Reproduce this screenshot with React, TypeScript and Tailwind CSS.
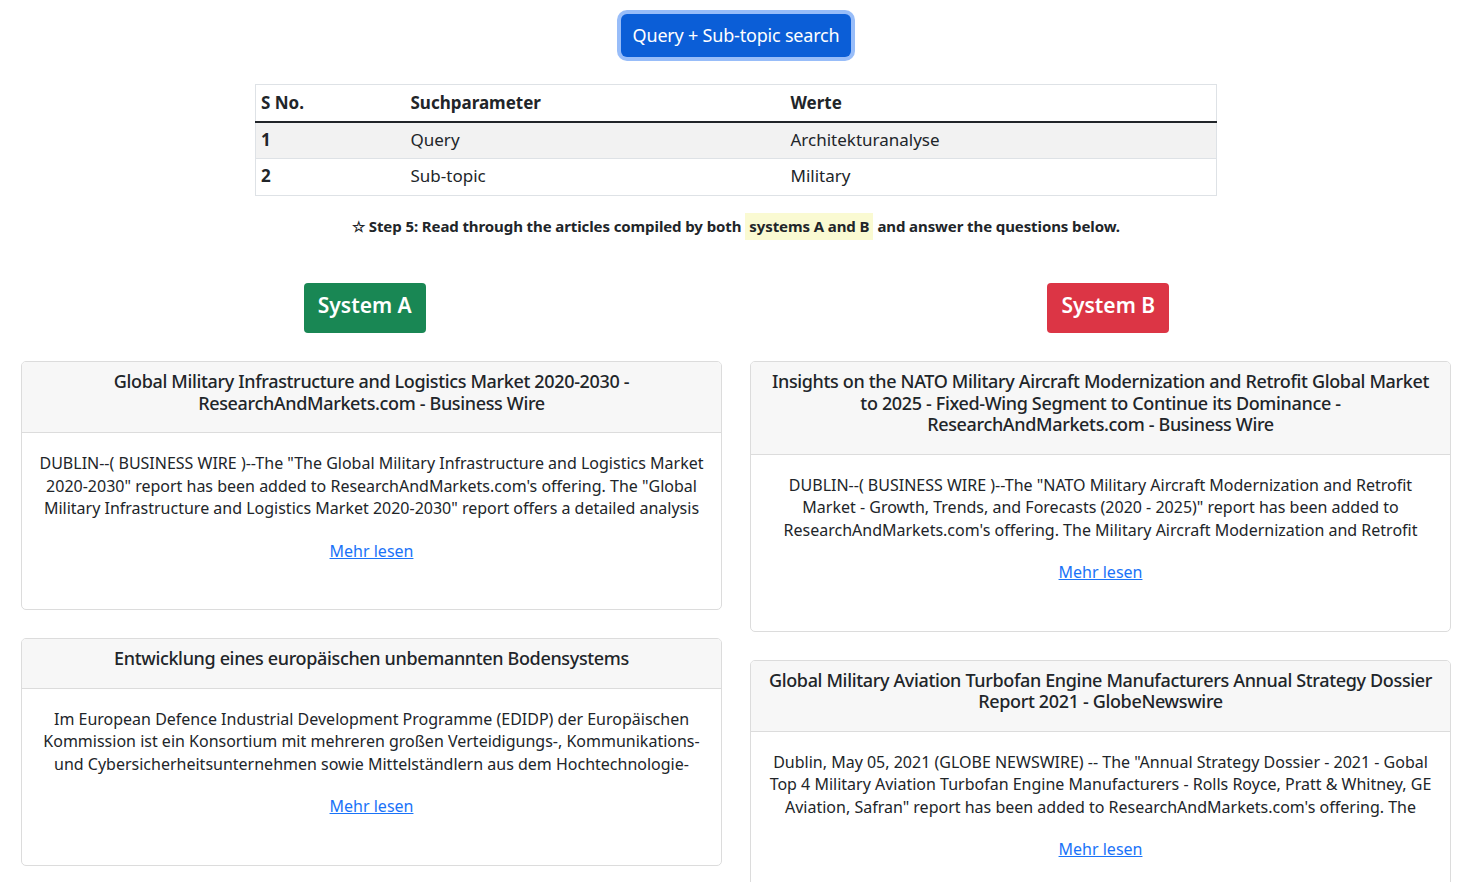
import React from "react";

type Card = { title: string[]; body: string[] };

const left: Card[] = [
  {
    title: [
      "Global Military Infrastructure and Logistics Market 2020-2030 -",
      "ResearchAndMarkets.com - Business Wire",
    ],
    body: [
      'DUBLIN--( BUSINESS WIRE )--The "The Global Military Infrastructure and Logistics Market',
      '2020-2030" report has been added to ResearchAndMarkets.com\'s offering. The "Global',
      'Military Infrastructure and Logistics Market 2020-2030" report offers a detailed analysis',
    ],
  },
  {
    title: ["Entwicklung eines europäischen unbemannten Bodensystems"],
    body: [
      "Im European Defence Industrial Development Programme (EDIDP) der Europäischen",
      "Kommission ist ein Konsortium mit mehreren großen Verteidigungs-, Kommunikations-",
      "und Cybersicherheitsunternehmen sowie Mittelständlern aus dem Hochtechnologie-",
    ],
  },
];

const right: Card[] = [
  {
    title: [
      "Insights on the NATO Military Aircraft Modernization and Retrofit Global Market",
      "to 2025 - Fixed-Wing Segment to Continue its Dominance -",
      "ResearchAndMarkets.com - Business Wire",
    ],
    body: [
      'DUBLIN--( BUSINESS WIRE )--The "NATO Military Aircraft Modernization and Retrofit',
      'Market - Growth, Trends, and Forecasts (2020 - 2025)" report has been added to',
      "ResearchAndMarkets.com's offering. The Military Aircraft Modernization and Retrofit",
    ],
  },
  {
    title: [
      "Global Military Aviation Turbofan Engine Manufacturers Annual Strategy Dossier",
      "Report 2021 - GlobeNewswire",
    ],
    body: [
      'Dublin, May 05, 2021 (GLOBE NEWSWIRE) -- The "Annual Strategy Dossier - 2021 - Gobal',
      "Top 4 Military Aviation Turbofan Engine Manufacturers - Rolls Royce, Pratt & Whitney, GE",
      'Aviation, Safran" report has been added to ResearchAndMarkets.com\'s offering. The',
    ],
  },
];

function ArticleCard({ card }: { card: Card }) {
  return (
    <div className="border border-[#dcdcdc] rounded-[5px] bg-white overflow-hidden">
      <div className="bg-[#f7f7f7] border-b border-[#dcdcdc] pt-[9px] pb-[18px] px-3 text-center text-[18px] leading-[21.5px] font-medium tracking-[-0.35px] text-[#212529]">
        {card.title.map((t, i) => (
          <div key={i} className="whitespace-nowrap">
            {t}
          </div>
        ))}
      </div>
      <div className="pt-[19px] pb-[47px] px-3 text-center text-[16px] leading-[22.5px] text-[#212529]">
        {card.body.map((t, i) => (
          <div key={i} className="whitespace-nowrap">
            {t}
          </div>
        ))}
        <div className="mt-[20px]">
          <a href="#" className="text-[#1a73f8] underline">
            Mehr lesen
          </a>
        </div>
      </div>
    </div>
  );
}

export default function App() {
  return (
    <div className="w-[1459px] min-h-[882px] bg-white font-['Noto_Sans',sans-serif] text-[#212529]">
      <div className="pl-[13px]">
        <div className="flex justify-center pt-[14px]">
          <button className="h-[43px] px-[12px] bg-[#0b5ed7] text-white text-[18px] tracking-[-0.2px] rounded-[6px] ring-4 ring-[#98bdf9]">
            Query + Sub-topic search
          </button>
        </div>

        <div className="flex justify-center mt-[27px]">
          <table className="w-[962px] border border-[#dee2e6] border-collapse text-[17px]">
            <thead>
              <tr className="h-[37px] border-b-2 border-[#212529]">
                <th className="w-[150px] text-left font-bold px-[5px]">S No.</th>
                <th className="w-[380px] text-left font-bold px-[5px]">Suchparameter</th>
                <th className="text-left font-bold px-[5px]">Werte</th>
              </tr>
            </thead>
            <tbody>
              <tr className="h-[37px] bg-[#f2f2f2] border-b border-[#dee2e6]">
                <td className="px-[5px] pb-[2px] font-bold">1</td>
                <td className="px-[5px] pb-[2px]">Query</td>
                <td className="px-[5px] pb-[2px]">Architekturanalyse</td>
              </tr>
              <tr className="h-[37px]">
                <td className="px-[5px] pb-[2px] font-bold">2</td>
                <td className="px-[5px] pb-[2px]">Sub-topic</td>
                <td className="px-[5px] pb-[2px]">Military</td>
              </tr>
            </tbody>
          </table>
        </div>

        <div className="flex justify-center items-center mt-[17px] text-[15px] font-bold tracking-[-0.1px] h-[27px]">
          <span>☆ Step 5: Read through the articles compiled by both</span>
          <span className="bg-[#fafad2] px-[4px] mx-[4px] h-[27px] flex items-center">systems A and B</span>
          <span>and answer the questions below.</span>
        </div>
      </div>

      <div className="grid grid-cols-2 mt-[43px]">
        <div className="flex justify-center">
          <div className="h-[50px] px-[14px] pb-[5px] flex items-center bg-[#198754] text-white text-[21px] font-semibold rounded-[4px]">
            System A
          </div>
        </div>
        <div className="flex justify-center pl-[28px]">
          <div className="h-[50px] px-[14px] pb-[5px] flex items-center bg-[#dc3545] text-white text-[21px] font-semibold rounded-[4px]">
            System B
          </div>
        </div>
      </div>

      <div className="grid grid-cols-2 gap-[28px] pl-[21px] pr-[8px] mt-[28px] items-start">
        <div className="flex flex-col gap-[28px]">
          {left.map((c, i) => (
            <ArticleCard key={i} card={c} />
          ))}
        </div>
        <div className="flex flex-col gap-[28px]">
          {right.map((c, i) => (
            <ArticleCard key={i} card={c} />
          ))}
        </div>
      </div>
    </div>
  );
}
